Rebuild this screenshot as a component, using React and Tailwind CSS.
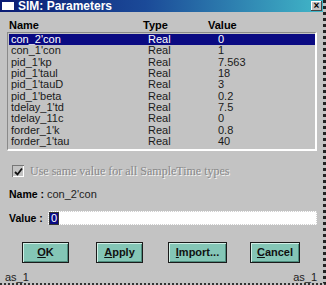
const rows = [
  ["con_2'con", 'Real', '0'],
  ["con_1'con", 'Real', '1'],
  ["pid_1'kp", 'Real', '7.563'],
  ["pid_1'taul", 'Real', '18'],
  ["pid_1'tauD", 'Real', '3'],
  ["pid_1'beta", 'Real', '0.2'],
  ["tdelay_1'td", 'Real', '7.5'],
  ['tdelay_11c', 'Real', '0'],
  ["forder_1'k", 'Real', '0.8'],
  ["forder_1'tau", 'Real', '40'],
]

function DlgButton({ children }) {
  return (
    <button className="flex h-[21px] w-full items-center justify-center border border-[#1a1a1a] bg-[#84c6b6] text-[11px] font-bold text-[#111] shadow-[inset_1px_1px_0_#d2efe6,inset_-1px_-1px_0_#4d8c7d]">
      {children}
    </button>
  )
}

export default function App() {
  return (
    <div
      className="flex h-[285px] w-[326px] flex-col bg-[#c3c3c3] text-[11px] leading-none text-black border-r-[3px] border-dotted border-r-[#222] border-b-2 border-b-[#333]"
      style={{ fontFamily: '"Liberation Sans", Arial, sans-serif' }}
    >
      {/* title bar */}
      <div className="flex h-[12px] items-center bg-[linear-gradient(90deg,#0b1c74_0%,#1b4a98_45%,#41b7c8_100%)] pl-[2px] pr-[1px]">
        <div className="h-[8px] w-[12px] bg-white" />
        <span className="ml-[4px] text-[12px] font-bold text-white">SIM: Parameters</span>
        <div className="ml-auto flex h-[10px] w-[11px] items-center justify-center bg-[#c3c3c3] text-[10px] font-bold leading-none shadow-[inset_-1px_-1px_0_#444,inset_1px_1px_0_#fff]">
          ×
        </div>
      </div>

      {/* column headings */}
      <div className="mt-[8px] flex h-[10px] items-center font-bold">
        <span className="ml-[9px] w-[134px]">Name</span>
        <span className="w-[65px]">Type</span>
        <span>Value</span>
      </div>

      {/* list */}
      <div className="mx-[7px] mt-[2px] h-[121px] w-[310px] border-l border-t border-l-[#8a8a8a] border-t-[#8a8a8a] border-r-2 border-b-2 border-r-white border-b-white pl-[1px] pt-[1px]">
        {rows.map(([n, t, v], i) => (
          <div
            key={n}
            className={`flex h-[11.3px] items-center ${i === 0 ? 'bg-[#0a0a82] text-white' : 'text-[#1a1a1a]'}`}
          >
            <span className="ml-[2px] w-[137px]">{n}</span>
            <span className="w-[70px]">{t}</span>
            <span>{v}</span>
          </div>
        ))}
      </div>

      {/* checkbox */}
      <div className="mt-[14px] flex items-center pl-[12px]">
        <div className="flex h-[12px] w-[12px] items-center justify-center border-l border-t border-l-[#777] border-t-[#777] bg-[#c3c3c3] shadow-[inset_-1px_-1px_0_#fff]">
          <svg width="9" height="9" viewBox="0 0 9 9">
            <path d="M1 5 L3.5 7.5 L8 1.5" stroke="#111" strokeWidth="1.8" fill="none" />
          </svg>
        </div>
        <span
          className="ml-[6px] text-[12px] text-[#888] [text-shadow:1px_1px_0_#f4f4f4]"
          style={{ fontFamily: '"Liberation Serif", "Times New Roman", serif' }}
        >
          Use same value for all SampleTime types
        </span>
      </div>

      {/* name */}
      <div className="mt-[12px] flex h-[10px] items-center">
        <span className="ml-[9px] w-[38px] text-[10.5px] font-bold">Name :</span>
        <span className="text-[#222]">con_2'con</span>
      </div>

      {/* value */}
      <div className="mt-[12px] flex items-center">
        <span className="ml-[9px] w-[39px] text-[10.5px] font-bold">Value :</span>
        <div className="flex h-[14px] w-[269px] items-center border border-dotted border-[#d0d0d0] bg-white pl-[1px]">
          <span className="flex h-[11px] items-center bg-[#0a0a82] px-[1px] text-white outline outline-1 outline-[#333]">0</span>
        </div>
      </div>

      {/* buttons */}
      <div className="mt-[17px] flex h-[21px]">
        <div className="ml-[22px] w-[47px]">
          <DlgButton><span><u>O</u>K</span></DlgButton>
        </div>
        <div className="ml-[27px] w-[47px]">
          <DlgButton><span><u>A</u>pply</span></DlgButton>
        </div>
        <div className="ml-[25px] w-[59px]">
          <DlgButton><span><u>I</u>mport...</span></DlgButton>
        </div>
        <div className="ml-[23px] w-[50px]">
          <DlgButton><span><u>C</u>ancel</span></DlgButton>
        </div>
      </div>

      {/* footer */}
      <div className="mt-[9px] flex items-center px-[5px] text-[#222]">
        <span>as_1</span>
        <span className="ml-auto mr-[1px]">as_1</span>
      </div>
    </div>
  )
}
